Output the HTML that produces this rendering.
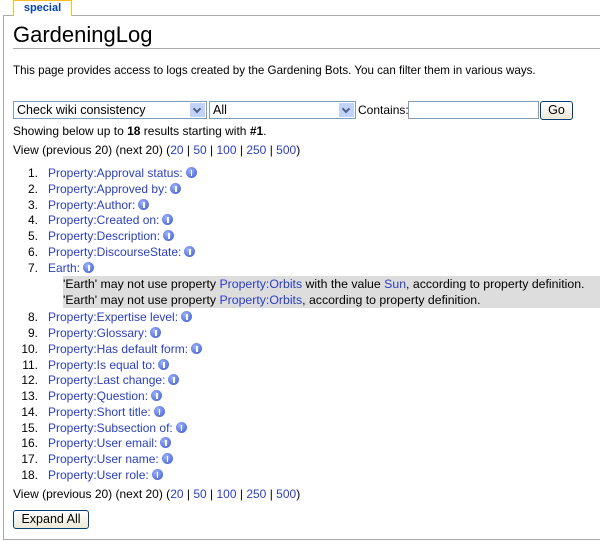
<!DOCTYPE html>
<html><head><style>
body{margin:0;width:600px;height:541px;overflow:hidden;background:#fff;font-family:"Liberation Sans",Arial,sans-serif;font-size:12px;color:#000;position:relative}
a{color:#2a3fc1;text-decoration:none}
.tab{position:absolute;left:13px;top:0;width:57px;height:15px;border:1px solid #fabd23;border-bottom:none;background:#fff;text-align:center;font-size:11px;font-weight:bold;color:#0645ad;line-height:14px;z-index:2}
.box{position:absolute;left:3px;top:15px;width:610px;height:523px;border:1px solid #aaa;background:#fff}
.abs{position:absolute}
h1{position:absolute;left:13px;top:22px;margin:0;font-weight:normal;font-size:22px;width:600px;border-bottom:1px solid #aaa;padding-bottom:0;line-height:26px}
.sel{position:absolute;top:101px;height:18px;border:1px solid #7f9db9;box-sizing:border-box;font-size:12.5px;line-height:16px;padding-left:3px}
.arr{position:absolute;right:1px;top:1px;width:15px;height:14px;background:#c1d3fb}
.arr:after{content:"";position:absolute;left:4px;top:3px;width:4px;height:4px;border-right:2px solid #4d6185;border-bottom:2px solid #4d6185;transform:rotate(45deg)}
.btn{position:absolute;border:1px solid #003c74;border-radius:3px;background:linear-gradient(#fff,#ece9d8);box-sizing:border-box;text-align:center;font-size:12.5px}
ol{position:absolute;left:0;top:166px;margin:0;padding:0;list-style:none;width:600px}
li{height:15.75px;line-height:15px;position:relative;padding-left:48px;white-space:nowrap}
li .n{position:absolute;right:562px}
.i{display:inline-block;width:11px;height:11px;border-radius:50%;background:radial-gradient(circle at 40% 35%,#9fb7ff,#3553c8);vertical-align:-1px;margin-left:3px;position:relative}
.i:after{content:"";position:absolute;left:5px;top:3px;width:1.5px;height:6px;background:#fff}
.g{position:absolute;left:63px;top:276px;width:537px;height:32px;background:#ddd;line-height:16px;font-size:12.3px}
</style></head><body>
<div class="tab">special</div>
<div class="box"></div>
<h1>GardeningLog</h1>
<div class="abs" style="left:13px;top:64px;font-size:11.6px">This page provides access to logs created by the Gardening Bots. You can filter them in various ways.</div>
<div class="sel" style="left:13px;width:194px">Check wiki consistency<span class="arr"></span></div>
<div class="sel" style="left:209px;width:147px">All<span class="arr"></span></div>
<div class="abs" style="left:358px;top:103px;font-size:12px">Contains:</div>
<div class="sel" style="left:408px;width:131px"></div>
<div class="btn" style="left:540px;top:101px;width:33px;height:19px;line-height:17px">Go</div>
<div class="abs" style="left:13px;top:124px">Showing below up to <b>18</b> results starting with <b>#1</b>.</div>
<div class="abs" style="left:13px;top:143px">View (previous 20) (next 20) (<a>20</a> | <a>50</a> | <a>100</a> | <a>250</a> | <a>500</a>)</div>
<ol>
<li><span class="n">1.</span><a>Property:Approval status:</a><span class="i"></span></li>
<li><span class="n">2.</span><a>Property:Approved by:</a><span class="i"></span></li>
<li><span class="n">3.</span><a>Property:Author:</a><span class="i"></span></li>
<li><span class="n">4.</span><a>Property:Created on:</a><span class="i"></span></li>
<li><span class="n">5.</span><a>Property:Description:</a><span class="i"></span></li>
<li><span class="n">6.</span><a>Property:DiscourseState:</a><span class="i"></span></li>
<li><span class="n">7.</span><a>Earth:</a><span class="i"></span></li>
<li style="height:34px"></li>
<li><span class="n">8.</span><a>Property:Expertise level:</a><span class="i"></span></li>
<li><span class="n">9.</span><a>Property:Glossary:</a><span class="i"></span></li>
<li><span class="n">10.</span><a>Property:Has default form:</a><span class="i"></span></li>
<li><span class="n">11.</span><a>Property:Is equal to:</a><span class="i"></span></li>
<li><span class="n">12.</span><a>Property:Last change:</a><span class="i"></span></li>
<li><span class="n">13.</span><a>Property:Question:</a><span class="i"></span></li>
<li><span class="n">14.</span><a>Property:Short title:</a><span class="i"></span></li>
<li><span class="n">15.</span><a>Property:Subsection of:</a><span class="i"></span></li>
<li><span class="n">16.</span><a>Property:User email:</a><span class="i"></span></li>
<li><span class="n">17.</span><a>Property:User name:</a><span class="i"></span></li>
<li><span class="n">18.</span><a>Property:User role:</a><span class="i"></span></li>
</ol>
<div class="g">'Earth' may not use property <a>Property:Orbits</a> with the value <a>Sun</a>, according to property definition.<br>'Earth' may not use property <a>Property:Orbits</a>, according to property definition.</div>
<div class="abs" style="left:13px;top:487px">View (previous 20) (next 20) (<a>20</a> | <a>50</a> | <a>100</a> | <a>250</a> | <a>500</a>)</div>
<div class="btn" style="left:13px;top:510px;width:76px;height:19px;line-height:17px">Expand All</div>
</body></html>
